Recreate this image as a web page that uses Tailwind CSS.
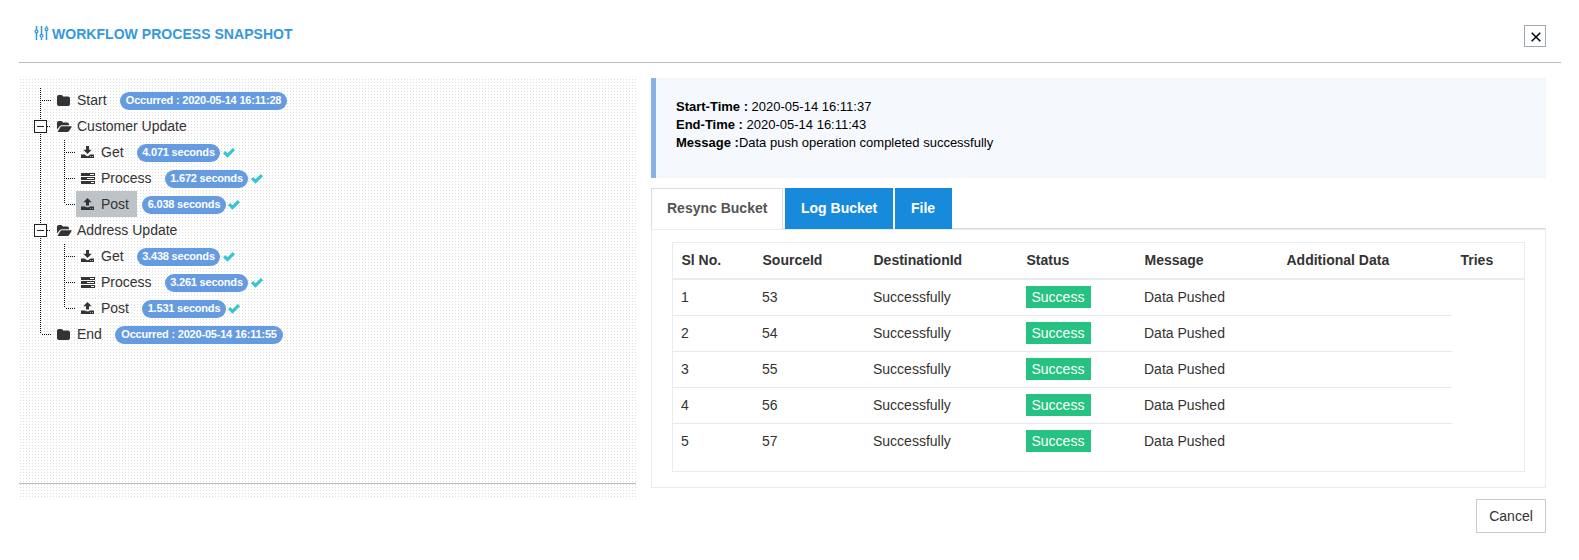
<!DOCTYPE html>
<html lang="en">
<head>
<meta charset="utf-8">
<title>Workflow Process Snapshot</title>
<script src="https://cdn.jsdelivr.net/npm/@tailwindcss/browser@4"></script>
</head>
<body class="bg-white font-['Liberation_Sans',Arial,sans-serif] text-[14px] text-[#333] w-[1579px] h-[560px] overflow-hidden">
<svg class="hidden">
  <symbol id="folder" viewBox="0 0 13 11"><path d="M0 1.8Q0 0 1.8 0H4.2Q6 0 6 1.6H11.2Q13 1.6 13 3.4V9.200Q13 11 11.200 11H1.800Q0 11 0 9.200Z"/></symbol>
  <symbol id="open" viewBox="0 0 15 11"><path d="M0 8.600V1.800Q0 0 1.800 0H4Q5.700 0 5.700 1.600H10.200Q12 1.600 12 3.400V4.200H5Q3.600 4.200 2.700 5.200ZM.5 11L3.200 6.200Q3.800 5.200 5 5.200H14.200Q15 5.200 14.600 6L12.300 9.800Q11.600 11 10.300 11Z"/></symbol>
  <symbol id="down" viewBox="0 0 13 12"><path d="M5 0H8V3.800H10.700L6.500 8L2.300 3.800H5ZM0 8.400H3.800L5.200 9.700Q6.500 10.600 7.800 9.700L9.200 8.400H13V12H0ZM9 10V10.800H9.800V10ZM11 10V10.800H11.800V10Z" fill-rule="evenodd"/></symbol>
  <symbol id="up" viewBox="0 0 13 12"><path d="M5 7.600H8V4.200H10.700L6.500 0L2.300 4.200H5ZM0 8.400H4.200Q4.500 9.200 5.300 9.200H7.700Q8.500 9.200 8.800 8.400H13V12H0ZM9 10V10.800H9.800V10ZM11 10V10.800H11.800V10Z" fill-rule="evenodd"/></symbol>
  <symbol id="server" viewBox="0 0 14 11"><path d="M0 0H14V3H0ZM0 4H14V7H0ZM0 8H14V11H0ZM9 1.100V1.900H13V1.100ZM6 5.100V5.900H13V5.100ZM10 9.100V9.900H13V9.100Z" fill-rule="evenodd"/></symbol>
  <symbol id="check" viewBox="0 0 12 10"><path d="M0 5.200L2.200 3L4.500 5.200L9.800 0L12 2.200L4.500 9.700Z"/></symbol>
</svg>

<header class="ml-[19px] w-[1542px] h-[63px] border-b border-[#bbb] flex justify-between pl-[15px] pr-[15px]">
  <div class="flex items-start pt-[25px] text-[#3598dc]">
    <svg class="w-[15px] h-[16px]" viewBox="0 0 15 16" fill="none" stroke="currentColor"><path d="M2.500 1V5M2.500 8V15M7.500 1V9M7.500 12.500V15M12.500 1V2.500M12.500 6V15" stroke-width="1.500"/><circle cx="2.500" cy="6.500" r="1.400" stroke-width="1.300"/><circle cx="7.500" cy="10.700" r="1.400" stroke-width="1.300"/><circle cx="12.500" cy="4.300" r="1.400" stroke-width="1.300"/></svg>
    <h1 class="ml-[3px] font-bold leading-[18px] whitespace-nowrap tracking-[0.04px]">WORKFLOW PROCESS SNAPSHOT</h1>
  </div>
  <button class="mt-[25px] w-[22px] h-[22px] border border-[#9caab5] flex items-center justify-center" aria-label="Close"><svg class="w-[10px] h-[10px] mt-px ml-px" viewBox="0 0 10 10" stroke="#000" stroke-width="1.500"><path d="M.7.7L9.300 9.300M9.300.7L.7 9.300"/></svg></button>
</header>

<main class="flex ml-[19px] pt-[15px]">
  <section class="relative w-[617px] h-[420px] pt-[9px] bg-[linear-gradient(90deg,#fff_1px,transparent_1px,transparent_2px,#fff_2px),linear-gradient(#fff_1px,#dedede_1px,#dedede_2px,#fff_2px)] bg-[length:3px_3px]">
    <svg class="absolute left-0 top-0 w-[80px] h-[270px]" viewBox="0 0 80 270" fill="none" stroke="#111" stroke-dasharray="1 1"><path d="M21.500 10V256M23 22.500H33M28 48.500H32M28 152.500H32M23 256.500H33M45.500 62V126M47 74.500H56M47 100.500H56M47 126.500H56M45.500 166V230M47 178.500H56M47 204.500H56M47 230.500H56"/></svg>
    <ul id="tree" class="relative"></ul>
    <div class="absolute left-0 top-[405px] w-full h-px bg-[#bbb]"></div>
  </section>

  <section class="ml-[15px] w-[895px]">
    <div class="h-[100px] border-l-[5px] border-[#89b1e5] bg-[#f5f8fd] pl-5 pt-[20px] text-[13px] leading-[18px] text-black">
      <p><b class="font-bold">Start-Time :</b> 2020-05-14 16:11:37</p>
      <p><b class="font-bold">End-Time :</b> 2020-05-14 16:11:43</p>
      <p><b class="font-bold">Message :</b>Data push operation completed successfully</p>
    </div>
    <nav class="mt-[10px] h-[41px] flex gap-[2px] font-bold border-b border-[#ddd] leading-[38px]">
      <a class="w-[132px] h-[41px] border border-b-0 border-[#ddd] bg-white text-[#555] pl-[15px]">Resync Bucket</a>
      <a class="w-[108px] h-[41px] pt-px bg-[#178adc] text-white pl-4">Log Bucket</a>
      <a class="w-[57px] h-[41px] pt-px bg-[#178adc] text-white pl-4">File</a>
    </nav>
    <div class="h-[259px] border border-[#e9ebee] pt-3 pl-5">
      <div class="w-[853px] h-[230px] border border-[#e7ecf1]">
        <table class="w-[851px] table-fixed border-separate border-spacing-0 text-left">
          <colgroup><col class="w-[81px]"><col class="w-[111px]"><col class="w-[153px]"><col class="w-[118px]"><col class="w-[142px]"><col class="w-[174px]"><col class="w-[72px]"></colgroup>
          <thead><tr class="h-[37px] [&>th]:border-b-2 [&>th]:border-[#e7ecf1] [&>th]:pl-[8.500px] [&>th]:whitespace-nowrap"><th>Sl No.</th><th>SourceId</th><th>DestinationId</th><th>Status</th><th>Message</th><th>Additional Data</th><th>Tries</th></tr></thead>
          <tbody id="rows"></tbody>
        </table>
      </div>
    </div>
    <div class="flex justify-end pt-[11px]"><button class="w-[70px] h-[34px] border border-[#ccc]">Cancel</button></div>
  </section>
</main>
<script>
const nodes = [
  [1, 'folder', 'Start', 'Occurred : 2020-05-14 16:11:28', 167, 43],
  [1, 'open', 'Customer Update'],
  [2, 'down', 'Get', '4.071 seconds', 83, 36],
  [2, 'server', 'Process', '1.672 seconds', 83, 64],
  [2, 'up', 'Post', '6.038 seconds', 84, 42, true],
  [1, 'open', 'Address Update'],
  [2, 'down', 'Get', '3.438 seconds', 83, 36],
  [2, 'server', 'Process', '3.261 seconds', 83, 64],
  [2, 'up', 'Post', '1.531 seconds', 84, 41],
  [1, 'folder', 'End', 'Occurred : 2020-05-14 16:11:55', 168, 38]
];
const sizes = {folder: 'w-[13px] h-[11px]', open: 'w-[15px] h-[11px]', down: 'w-[13px] h-[12px]', up: 'w-[13px] h-[12px]', server: 'w-[14px] h-[11px]'};
document.getElementById('tree').innerHTML = nodes.map(([lvl, icon, label, badge, w, off, sel]) => `
<li class="h-[26px] flex items-center ${lvl === 1 ? 'pl-[15px]' : 'pl-[57px]'}">
  ${lvl === 1 ? `<span class="w-[13px] h-[13px] mr-[10px] mt-px shrink-0 ${icon === 'open' ? 'border border-[#222] bg-white flex items-center justify-center' : ''}">${icon === 'open' ? '<i class="w-[7px] h-px bg-[#222]"></i>' : ''}</span>` : ''}
  <span class="h-[26px] flex items-center ${sel ? 'bg-[#bdc3c7] w-[61px]' : ''}">
    <span class="w-[20px] flex shrink-0 ${lvl === 2 ? 'ml-[5px]' : ''}"><svg class="${sizes[icon]}" fill="#333"><use href="#${icon}"/></svg></span>
    <span class="whitespace-nowrap" style="width:${badge && !sel ? off + 'px' : 'auto'}">${label}</span>
  </span>
  ${badge ? `<span class="h-[18px] mt-[2px] rounded-full bg-[#659be0] text-white text-[11px] font-bold leading-[17px] tracking-[-0.2px] text-center whitespace-nowrap shrink-0 ${sel ? 'ml-[5px]' : ''}" style="width:${w}px">${badge}</span>` : ''}
  ${lvl === 2 ? `<svg class="w-[12px] h-[10px] mt-px ${label === 'Post' ? 'ml-[2px]' : 'ml-[3px]'}" fill="#36c6d3"><use href="#check"/></svg>` : ''}
</li>`).join('');
document.getElementById('rows').innerHTML = [53, 54, 55, 56, 57].map((s, i) => {
  const c = i ? 'border-t border-[#e7eaed] pl-2' : 'pl-2';
  return `<tr class="${i ? 'h-[36px]' : 'h-[35px]'}"><td class="${c}">${i + 1}</td><td class="${c}">${s}</td><td class="${c}">Successfully</td><td class="${c}"><span class="block w-[65px] h-[22px] mb-px leading-[22px] bg-[#26c281] text-white pl-[5.500px]">Success</span></td><td class="${c}">Data Pushed</td><td class="${c}"></td></tr>`;
}).join('');
</script>
</body>
</html>
